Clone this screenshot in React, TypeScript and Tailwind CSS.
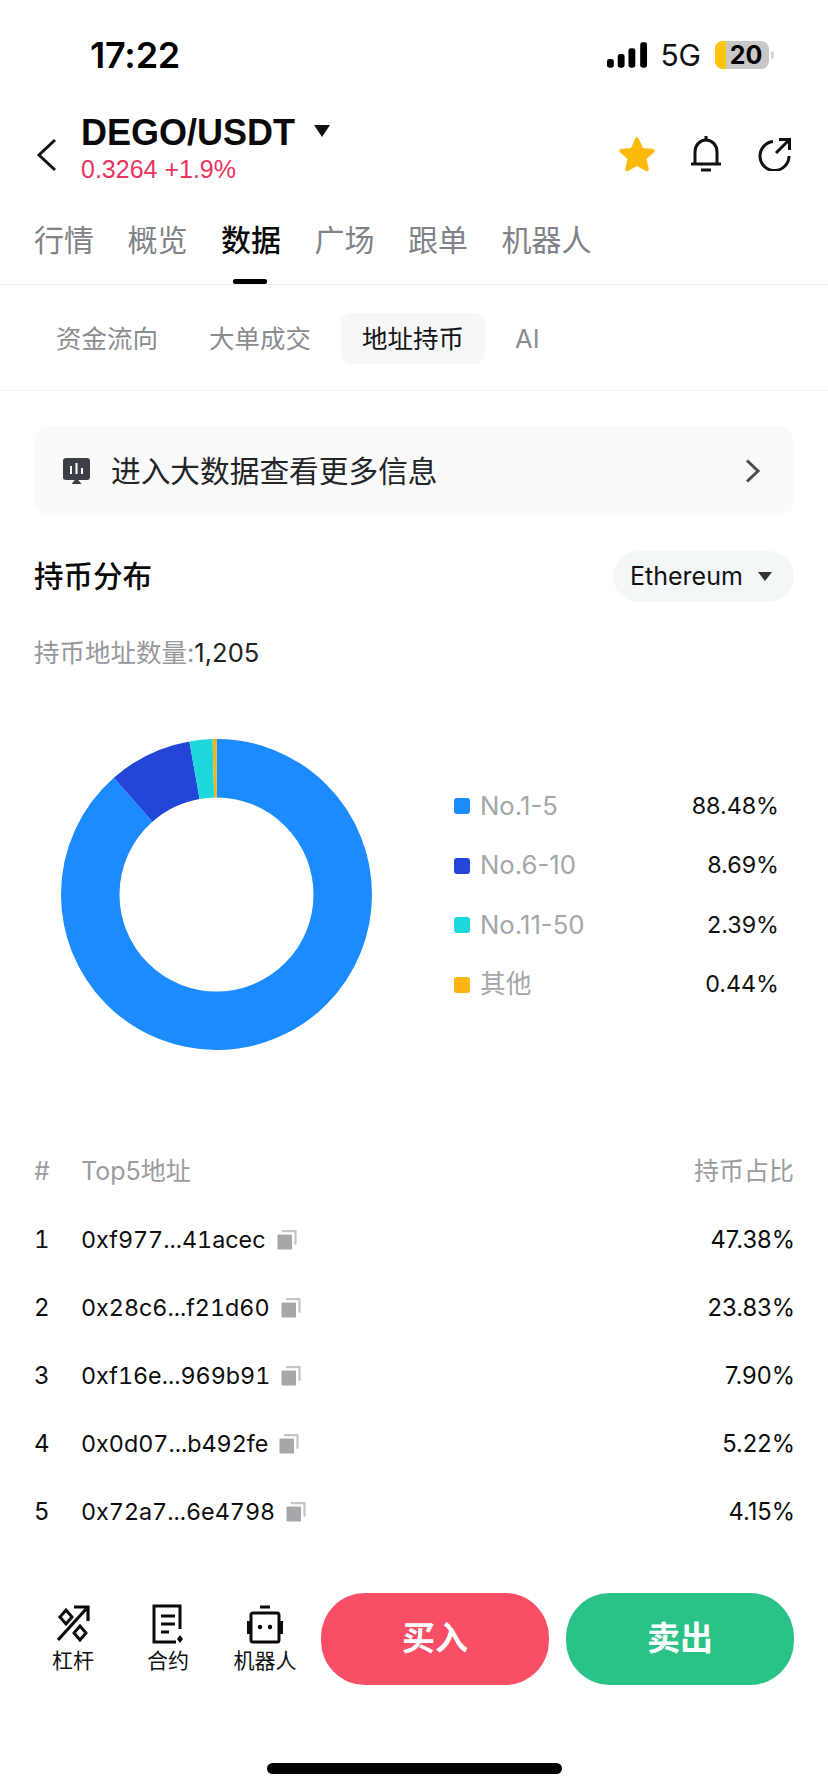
const tabs = ['行情', '概览', '数据', '广场', '跟单', '机器人']
const subTabs = ['资金流向', '大单成交', '地址持币', 'AI']

const slices = [
  { label: 'No.1-5', value: 88.48, color: '#1b8bff', dot: 'bg-[#1b8bff]' },
  { label: 'No.6-10', value: 8.69, color: '#2146d8', dot: 'bg-[#2146d8]' },
  { label: 'No.11-50', value: 2.39, color: '#1cd8dc', dot: 'bg-[#1cd8dc]' },
  { label: '其他', value: 0.44, color: '#f5b50e', dot: 'bg-[#fdb60f]' },
]

const holders = [
  { address: '0xf977...41acec', share: '47.38%' },
  { address: '0x28c6...f21d60', share: '23.83%' },
  { address: '0xf16e...969b91', share: '7.90%' },
  { address: '0x0d07...b492fe', share: '5.22%' },
  { address: '0x72a7...6e4798', share: '4.15%' },
]

function Donut() {
  const r = 126.25
  const circumference = 2 * Math.PI * r
  let offset = 0
  return (
    <svg width="311" height="311" viewBox="0 0 311 311">
      <g transform="rotate(-90 155.5 155.5)">
        {slices.map((slice) => {
          const length = (slice.value / 100) * circumference
          const circle = (
            <circle
              key={slice.label}
              cx="155.5"
              cy="155.5"
              r={r}
              fill="none"
              stroke={slice.color}
              strokeWidth="58.5"
              strokeDasharray={`${length} ${circumference - length}`}
              strokeDashoffset={-offset}
            />
          )
          offset += length
          return circle
        })}
      </g>
    </svg>
  )
}

function CopyIcon() {
  return (
    <svg width="20" height="20" viewBox="0 0 20 20" className="shrink-0">
      <rect x="0.5" y="4.5" width="14.5" height="15" rx="1" fill="#a6a7ab" />
      <path d="M5 1.2h13.5v13.5" fill="none" stroke="#c4c5c8" strokeWidth="2.2" />
    </svg>
  )
}

function Triangle({ className }: { className: string }) {
  return <div className={`h-0 w-0 border-x-solid border-t-solid border-x-transparent ${className}`} />
}

function StatusBar() {
  return (
    <div className="flex h-[110px] items-center justify-between pl-[90px] pr-[54px]">
      <span className="text-[36px] font-semibold leading-none tracking-[-0.2px] text-black">17:22</span>
      <div className="flex items-center">
        <svg width="41" height="26" viewBox="0 0 42 26" fill="#000">
          <rect x="0" y="17" width="7" height="9" rx="2.5" />
          <rect x="11" y="12" width="7" height="14" rx="2.5" />
          <rect x="22" y="6" width="7" height="20" rx="2.5" />
          <rect x="34" y="0" width="7" height="26" rx="2.5" />
        </svg>
        <span className="ml-[12px] text-[30px] leading-none text-[#111]">5G</span>
        <div className="relative ml-[14px] flex h-[28px] w-[54px] items-center justify-center overflow-hidden rounded-[8px] bg-[#c8c8c8] pl-[8px]">
          <div className="absolute inset-y-0 left-0 w-[11px] bg-[#fcc50c]" />
          <span className="relative text-[25px] font-bold leading-none text-black">20</span>
        </div>
        <div className="ml-[2px] h-[8px] w-[3px] rounded-r-full bg-[#d6d6d6]" />
      </div>
    </div>
  )
}

function Header() {
  return (
    <div className="flex h-[88px] items-center pl-[36px] pr-[36px]">
      <svg width="22" height="34" viewBox="0 0 22 34" fill="none" stroke="#111" strokeWidth="3" className="mt-[2px]">
        <path d="M19 2 3 17l16 15" />
      </svg>
      <div className="ml-[23px] mt-[-14px] flex flex-col">
        <div className="flex items-center">
          <span className="font-['Liberation_Sans',sans-serif] text-[36px] font-bold leading-[42px] text-[#0a0a0a]">DEGO/USDT</span>
          <Triangle className="ml-[19px] mt-[-4px] border-x-[8px] border-t-[12px] border-t-[#111]" />
        </div>
        <span className="mt-[1px] font-['Liberation_Sans',sans-serif] text-[25px] leading-[28px] text-[#ea3460]">0.3264 +1.9%</span>
      </div>
      <div className="ml-auto flex items-center">
        <svg width="38" height="36" viewBox="0 0 24 23" fill="#fdb90c">
          <path d="M12 .8c.5 0 .9.3 1.1.8l2.7 6 6.5.7c1 .1 1.4 1.4.7 2l-4.900 4.400 1.400 6.400c.2 1-.9 1.800-1.800 1.300L12 19.100l-5.700 3.300c-.9.5-2-.3-1.800-1.300l1.400-6.400-4.900-4.400c-.7-.7-.3-1.900.7-2l6.500-.7 2.700-6c.2-.5.600-.8 1.100-.8Z" />
        </svg>
        <svg width="32" height="38" viewBox="0 0 32 38" fill="none" stroke="#111" strokeWidth="3" className="ml-[34px]">
          <path d="M1 29h30M5 29V17C5 10 10 5 16 5s11 5 11 12v12" />
          <path d="M16 1v3M11 35h10" />
        </svg>
        <svg width="34" height="34" viewBox="0 0 34 34" fill="none" stroke="#111" strokeWidth="3" className="ml-[36px]">
          <path d="M31 19A14.500 14.500 0 1 1 15 4.600" />
          <path d="M18 16 31 3M21 2.500h10.500V13" />
        </svg>
      </div>
    </div>
  )
}

function Tabs() {
  return (
    <div className="flex h-[87px] gap-[33.5px] border-b border-[#f0f0f0] pl-[34px] pt-[20px]">
      {tabs.map((tab) => {
        const active = tab === '数据'
        return (
          <div key={tab} className="relative h-[44px]">
            <span className={`text-[30px] leading-[44px] ${active ? 'font-medium text-[#0a0a0a]' : 'text-[#808287]'}`}>{tab}</span>
            {active && <div className="absolute left-[12px] top-[61px] h-[5px] w-[34px] rounded-[2px] bg-black" />}
          </div>
        )
      })}
    </div>
  )
}

function SubTabs() {
  return (
    <div className="flex h-[106px] items-center border-b border-[#f4f4f4] pl-[35px] pt-[2px]">
      {subTabs.map((tab) => {
        const active = tab === '地址持币'
        return (
          <div
            key={tab}
            className={`flex h-[51px] items-center rounded-[10px] px-[21px] pt-[2px] text-[25.5px] ${tab === 'AI' ? '' : 'mr-[9px]'} ${active ? 'bg-[#f5f7f9] text-[#141414]' : 'text-[#8b8c90]'}`}
          >
            {tab}
          </div>
        )
      })}
    </div>
  )
}

function Banner() {
  return (
    <div className="mx-[34px] mt-[35px] flex h-[90px] items-center rounded-[16px] bg-[#fafafa] pl-[29px] pr-[33px]">
      <svg width="27" height="26" viewBox="0 0 27 26" className="shrink-0">
        <rect x="0" y="0" width="27" height="22" rx="3" fill="#3c3f45" />
        <path d="M8 8v8M13.500 5v11M19 10v6" stroke="#fff" strokeWidth="2" />
        <path d="M13.500 20l5 6h-10z" fill="#3c3f45" />
      </svg>
      <span className="ml-[21px] text-[29.700px] text-[#222428]">进入大数据查看更多信息</span>
      <svg width="16" height="24" viewBox="0 0 16 24" fill="none" stroke="#4a4c51" strokeWidth="3" className="ml-auto">
        <path d="m2 1.500 11 10.500L2 22.500" />
      </svg>
    </div>
  )
}

function Distribution() {
  return (
    <div className="px-[34px]">
      <div className="mt-[35px] flex h-[51px] items-center justify-between">
        <span className="text-[29.500px] font-medium text-[#0a0a0a]">持币分布</span>
        <div className="flex h-[51px] w-[181px] items-center rounded-full bg-[#f4f7f8] pl-[17px]">
          <span className="text-[25px] text-[#111]">Ethereum</span>
          <Triangle className="ml-[15px] border-x-[7px] border-t-[9px] border-t-[#333]" />
        </div>
      </div>
      <div className="mt-[33px] flex h-[36px] items-center text-[25.500px]">
        <span className="text-[#97989c]">持币地址数量:</span>
        <span className="text-[#222]">1,205</span>
      </div>
      <div className="mt-[68px] flex items-center">
        <div className="ml-[27px] shrink-0">
          <Donut />
        </div>
        <div className="ml-[82px] mt-[2px] flex w-[325px] flex-col">
          {slices.map((slice) => (
            <div key={slice.label} className="flex h-[59.500px] items-center">
              <div className={`h-[16px] w-[16px] rounded-[3px] ${slice.dot}`} />
              <span className="ml-[10px] text-[25.700px] text-[#a5a6aa]">{slice.label}</span>
              <span className="ml-auto text-[23.300px] text-[#111]">{slice.value.toFixed(2)}%</span>
            </div>
          ))}
        </div>
      </div>
    </div>
  )
}

function Holders() {
  return (
    <div className="mt-[104px] px-[34px]">
      <div className="flex h-[36px] items-center text-[25px] text-[#9b9ca0]">
        <span className="w-[47px]">#</span>
        <span>Top5地址</span>
        <span className="ml-auto">持币占比</span>
      </div>
      <div className="mt-[16px] flex flex-col">
        {holders.map((holder, i) => (
          <div key={holder.address} className="flex h-[68px] items-center text-[#0d0d0d]">
            <span className="w-[47px] text-[24px] tabular-nums">{i + 1}</span>
            <span className="text-[23.300px] tabular-nums">{holder.address}</span>
            <span className="ml-[11px]">
              <CopyIcon />
            </span>
            <span className="ml-auto mr-[-1px] text-[23.700px]">{holder.share}</span>
          </div>
        ))}
      </div>
    </div>
  )
}

function ActionBar() {
  return (
    <div className="absolute inset-x-0 top-[1593px] flex h-[92px] items-center pl-[28px] pr-[33px]">
      <div className="flex w-[293px]">
        <div className="flex w-[90px] flex-col items-center">
          <svg width="34" height="40" viewBox="0 0 34 40" fill="none" stroke="#0a0a0a" strokeWidth="3.200">
            <path d="M2 36 31 4M18 3h14v14" />
            <path d="M10 6l6 7-6 7-6-7zM24 22l6 7-6 7-6-7z" strokeWidth="3" />
          </svg>
          <span className="mt-[3px] text-[21px] leading-[28px] text-[#111]">杠杆</span>
        </div>
        <div className="ml-[5px] flex w-[90px] flex-col items-center">
          <svg width="32" height="40" viewBox="0 0 32 40" fill="none" stroke="#0a0a0a" strokeWidth="3">
            <path d="M28 25V2H2v36h22" />
            <path d="M9 12h14M9 20h14M9 28h8" />
            <path d="m28 31 3 4-3 4-3-4z" fill="#0a0a0a" stroke="none" />
          </svg>
          <span className="mt-[3px] text-[21px] leading-[28px] text-[#111]">合约</span>
        </div>
        <div className="ml-[2px] flex w-[100px] flex-col items-center">
          <svg width="36" height="40" viewBox="0 0 36 40" fill="none" stroke="#0a0a0a" strokeWidth="3">
            <rect x="4" y="9" width="28" height="29" rx="2" />
            <path d="M13 3h10" />
            <path d="M1.500 17v13M34.500 17v13" strokeWidth="3.500" />
            <circle cx="13" cy="23" r="2.200" fill="#0a0a0a" stroke="none" />
            <circle cx="23" cy="23" r="2.200" fill="#0a0a0a" stroke="none" />
          </svg>
          <span className="mt-[3px] text-[21px] leading-[28px] text-[#111]">机器人</span>
        </div>
      </div>
      <button className="flex h-[92px] w-[228px] items-center justify-center rounded-[44px] bg-[#f94f66] text-[33px] font-semibold text-[#fff]">买入</button>
      <button className="ml-[17px] flex h-[92px] w-[228px] items-center justify-center rounded-[44px] bg-[#2bc287] text-[33px] font-semibold text-[#fff]">卖出</button>
    </div>
  )
}

export default function App() {
  return (
    <div className="relative h-[1792px] w-[828px] overflow-hidden bg-white font-['Inter','Noto_Sans_CJK_SC',sans-serif]">
      <StatusBar />
      <Header />
      <Tabs />
      <SubTabs />
      <Banner />
      <Distribution />
      <Holders />
      <ActionBar />
      <div className="absolute left-[267px] top-[1763px] h-[11px] w-[295px] rounded-full bg-black" />
    </div>
  )
}
